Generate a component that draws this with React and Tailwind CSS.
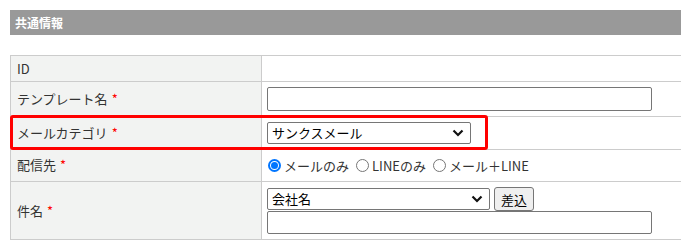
import React from "react";

const font = {
  fontFamily: '"Noto Sans CJK JP", "Noto Sans", sans-serif',
};

const Req = () => <span className="text-[#ff0000] ml-1">*</span>;

const Chevron = () => (
  <svg width="12" height="8" viewBox="0 0 12 8" className="absolute right-[6px] top-1/2 -translate-y-1/2 pointer-events-none">
    <path d="M1.5 1.5 L6 6 L10.5 1.5" fill="none" stroke="#111" strokeWidth="2.2" />
  </svg>
);

const FakeSelect = ({ value, width }) => (
  <div
    className={`relative h-[22px] ${width} border border-[#767676] rounded-[2px] bg-white flex items-center pl-[4px] text-[13px] text-black`}
  >
    {value}
    <Chevron />
  </div>
);

const Radio = ({ checked, label }) => (
  <label className="flex items-center gap-[3px] mr-[7px]">
    <span
      className={`w-[13px] h-[13px] rounded-full border flex items-center justify-center ${
        checked ? "border-[#0075ff] border-2" : "border-[#767676]"
      }`}
    >
      {checked && <span className="w-[7px] h-[7px] rounded-full bg-[#0075ff]" />}
    </span>
    <span>{label}</span>
  </label>
);

export default function App() {
  const labelCell = "w-[251px] bg-[#f2f3f2] border border-[#cccccc] pl-[6px] text-[13px] text-[#333] align-middle";
  const valueCell = "border border-[#cccccc] pl-[5px] align-middle";

  return (
    <div className="w-[681px] h-[250px] bg-white overflow-hidden" style={font}>
      <div className="ml-[10px] mt-[10px] h-[25px] bg-[#999999] flex items-center pl-[5px] text-white text-[12px] font-bold">
        共通情報
      </div>

      <div className="relative mt-[20px] ml-[10px] w-[700px]">
        <table className="w-full border-collapse">
          <tbody>
            <tr className="h-[26px]">
              <td className={labelCell}>ID</td>
              <td className={valueCell}></td>
            </tr>
            <tr className="h-[35px]">
              <td className={labelCell}>
                テンプレート名<Req />
              </td>
              <td className={valueCell}>
                <div className="w-[385px] h-[24px] border border-[#767676] rounded-[2px] bg-white" />
              </td>
            </tr>
            <tr className="h-[33px]">
              <td className={labelCell}>
                メールカテゴリ<Req />
              </td>
              <td className={valueCell}>
                <FakeSelect value="サンクスメール" width="w-[204px]" />
              </td>
            </tr>
            <tr className="h-[32px]">
              <td className={`${labelCell} align-top pt-[5px]`}>
                配信先<Req />
              </td>
              <td className={`${valueCell} align-top pt-[6px]`}>
                <div className="flex items-center text-[13px] text-[#333] pl-[1px]">
                  <Radio checked label="メールのみ" />
                  <Radio label="LINEのみ" />
                  <Radio label="メール＋LINE" />
                </div>
              </td>
            </tr>
            <tr className="h-[58px]">
              <td className={labelCell}>
                件名<Req />
              </td>
              <td className={valueCell}>
                <div className="flex items-center gap-[4px]">
                  <FakeSelect value="会社名" width="w-[223px]" />
                  <button className="h-[24px] px-[6px] bg-[#efefef] border border-[#767676] rounded-[3px] text-[13px] text-black leading-none">
                    差込
                  </button>
                </div>
                <div className="w-[385px] h-[23px] border border-[#767676] rounded-[2px] bg-white" />
              </td>
            </tr>
          </tbody>
        </table>

        <div className="absolute left-0 top-[60px] w-[478px] h-[35px] border-[3px] border-[#ff0000] rounded-[3px] pointer-events-none" />
      </div>
    </div>
  );
}
